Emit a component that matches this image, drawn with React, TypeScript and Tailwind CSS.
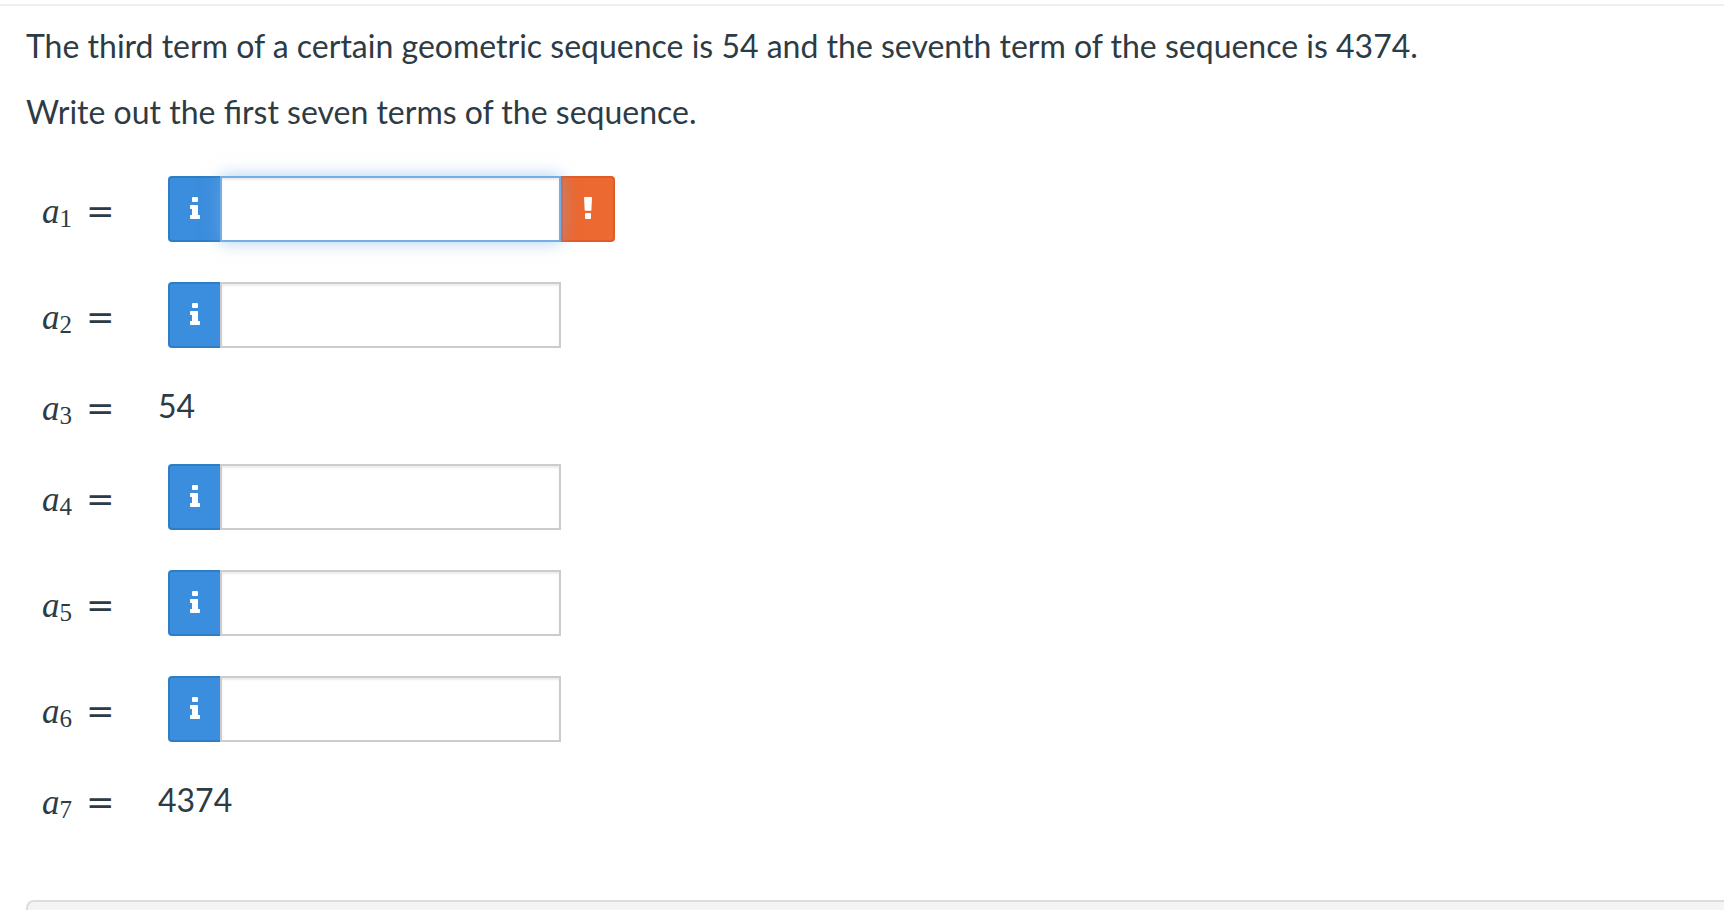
import { useState } from 'react'
import { clsx } from 'clsx'

interface Term {
  index: number
  value?: string
  hasError?: boolean
}

const TERMS: Term[] = [
  { index: 1, hasError: true },
  { index: 2 },
  { index: 3, value: '54' },
  { index: 4 },
  { index: 5 },
  { index: 6 },
  { index: 7, value: '4374' },
]

function InfoIcon() {
  return (
    <svg width="12" height="24" viewBox="0 1 12 24" fill="currentColor" aria-hidden="true">
      <rect x="3" y="1" width="6" height="5" rx="1" />
      <path d="M1.7 9h6.6q.7 0 .7.7V19h1.3q.7 0 .7.7v2.6q0 .7-.7.7H1.7q-.7 0-.7-.7v-2.6q0-.7.7-.7H3v-6H1.7q-.7 0-.7-.7V9.7q0-.7.7-.7z" />
    </svg>
  )
}

function ErrorIcon() {
  return (
    <svg width="8" height="24" viewBox="0 1 8 24" fill="currentColor" aria-hidden="true">
      <path d="M.6 1h6.9q.5 0 .5.6l-.6 12.6q0 .6-.6.6H1.3q-.6 0-.6-.6L0 1.6Q0 1 .6 1z" />
      <rect x="1" y="17" width="6" height="6" rx="1" />
    </svg>
  )
}

function TermLabel({ index }: { index: number }) {
  return (
    <span className="flex items-baseline pt-1.5 font-['Liberation_Serif',serif] text-[35px] leading-[30px]">
      <span className="italic">a</span>
      <sub className="relative top-1 align-baseline text-[25px] leading-none">{index}</sub>
      <span className="ml-3.5 font-['DejaVu_Sans',sans-serif] text-[34px] leading-6">=</span>
    </span>
  )
}

export default function App() {
  const [answers, setAnswers] = useState<Record<number, string>>({})

  return (
    <div className="flex min-h-screen flex-col bg-white font-[Lato,sans-serif] text-[32px] leading-10 text-[#2d3b45]">
      <div className="h-1.5 border-b-2 border-[#eeeeee]" />

      <main className="px-[26px] pt-5">
        <p className="mb-[26px]">
          The third term of a certain geometric sequence is 54 and the seventh term of the sequence is 4374.
        </p>
        <p className="mb-6">Write out the first seven terms of the sequence.</p>

        {TERMS.map(({ index, value, hasError }) => (
          <div key={index} className="flex items-center py-5 pl-4">
            {value ? (
              <>
                <div className="w-[116px]">
                  <TermLabel index={index} />
                </div>
                <span className="leading-9">{value}</span>
              </>
            ) : (
              <>
                <label htmlFor={`term-${index}`} className="w-[126px]">
                  <TermLabel index={index} />
                </label>
                <div className="flex h-[66px]">
                  <button
                    type="button"
                    aria-label={`Entry tips for term ${index}`}
                    className="flex w-[52px] items-center justify-center rounded-l border-2 border-r-0 border-[#2f7dc5] bg-[#3b8ddd] text-white"
                  >
                    <InfoIcon />
                  </button>
                  <input
                    id={`term-${index}`}
                    type="text"
                    value={answers[index] ?? ''}
                    onChange={e => setAnswers({ ...answers, [index]: e.target.value })}
                    className={clsx(
                      'relative w-[341px] border-2 bg-white px-4 outline-none',
                      hasError
                        ? 'border-[#75ade6] shadow-[inset_0_2px_2px_rgba(0,0,0,0.075),0_0_16px_rgba(117,173,230,0.6)]'
                        : 'border-[#cccccc] shadow-[inset_0_2px_2px_rgba(0,0,0,0.075)]'
                    )}
                  />
                  {hasError && (
                    <button
                      type="button"
                      aria-label={`Show error for term ${index}`}
                      className="flex w-[54px] items-center justify-center rounded-r border-2 border-[#e25a28] bg-[#ec6931] text-white"
                    >
                      <ErrorIcon />
                    </button>
                  )}
                </div>
              </>
            )}
          </div>
        ))}
      </main>

      <footer className="mt-[62px] ml-[26px] min-h-2.5 flex-1 rounded-tl-lg border-t-2 border-l-2 border-[#dddddd] bg-[#f4f4f4]" />
    </div>
  )
}
